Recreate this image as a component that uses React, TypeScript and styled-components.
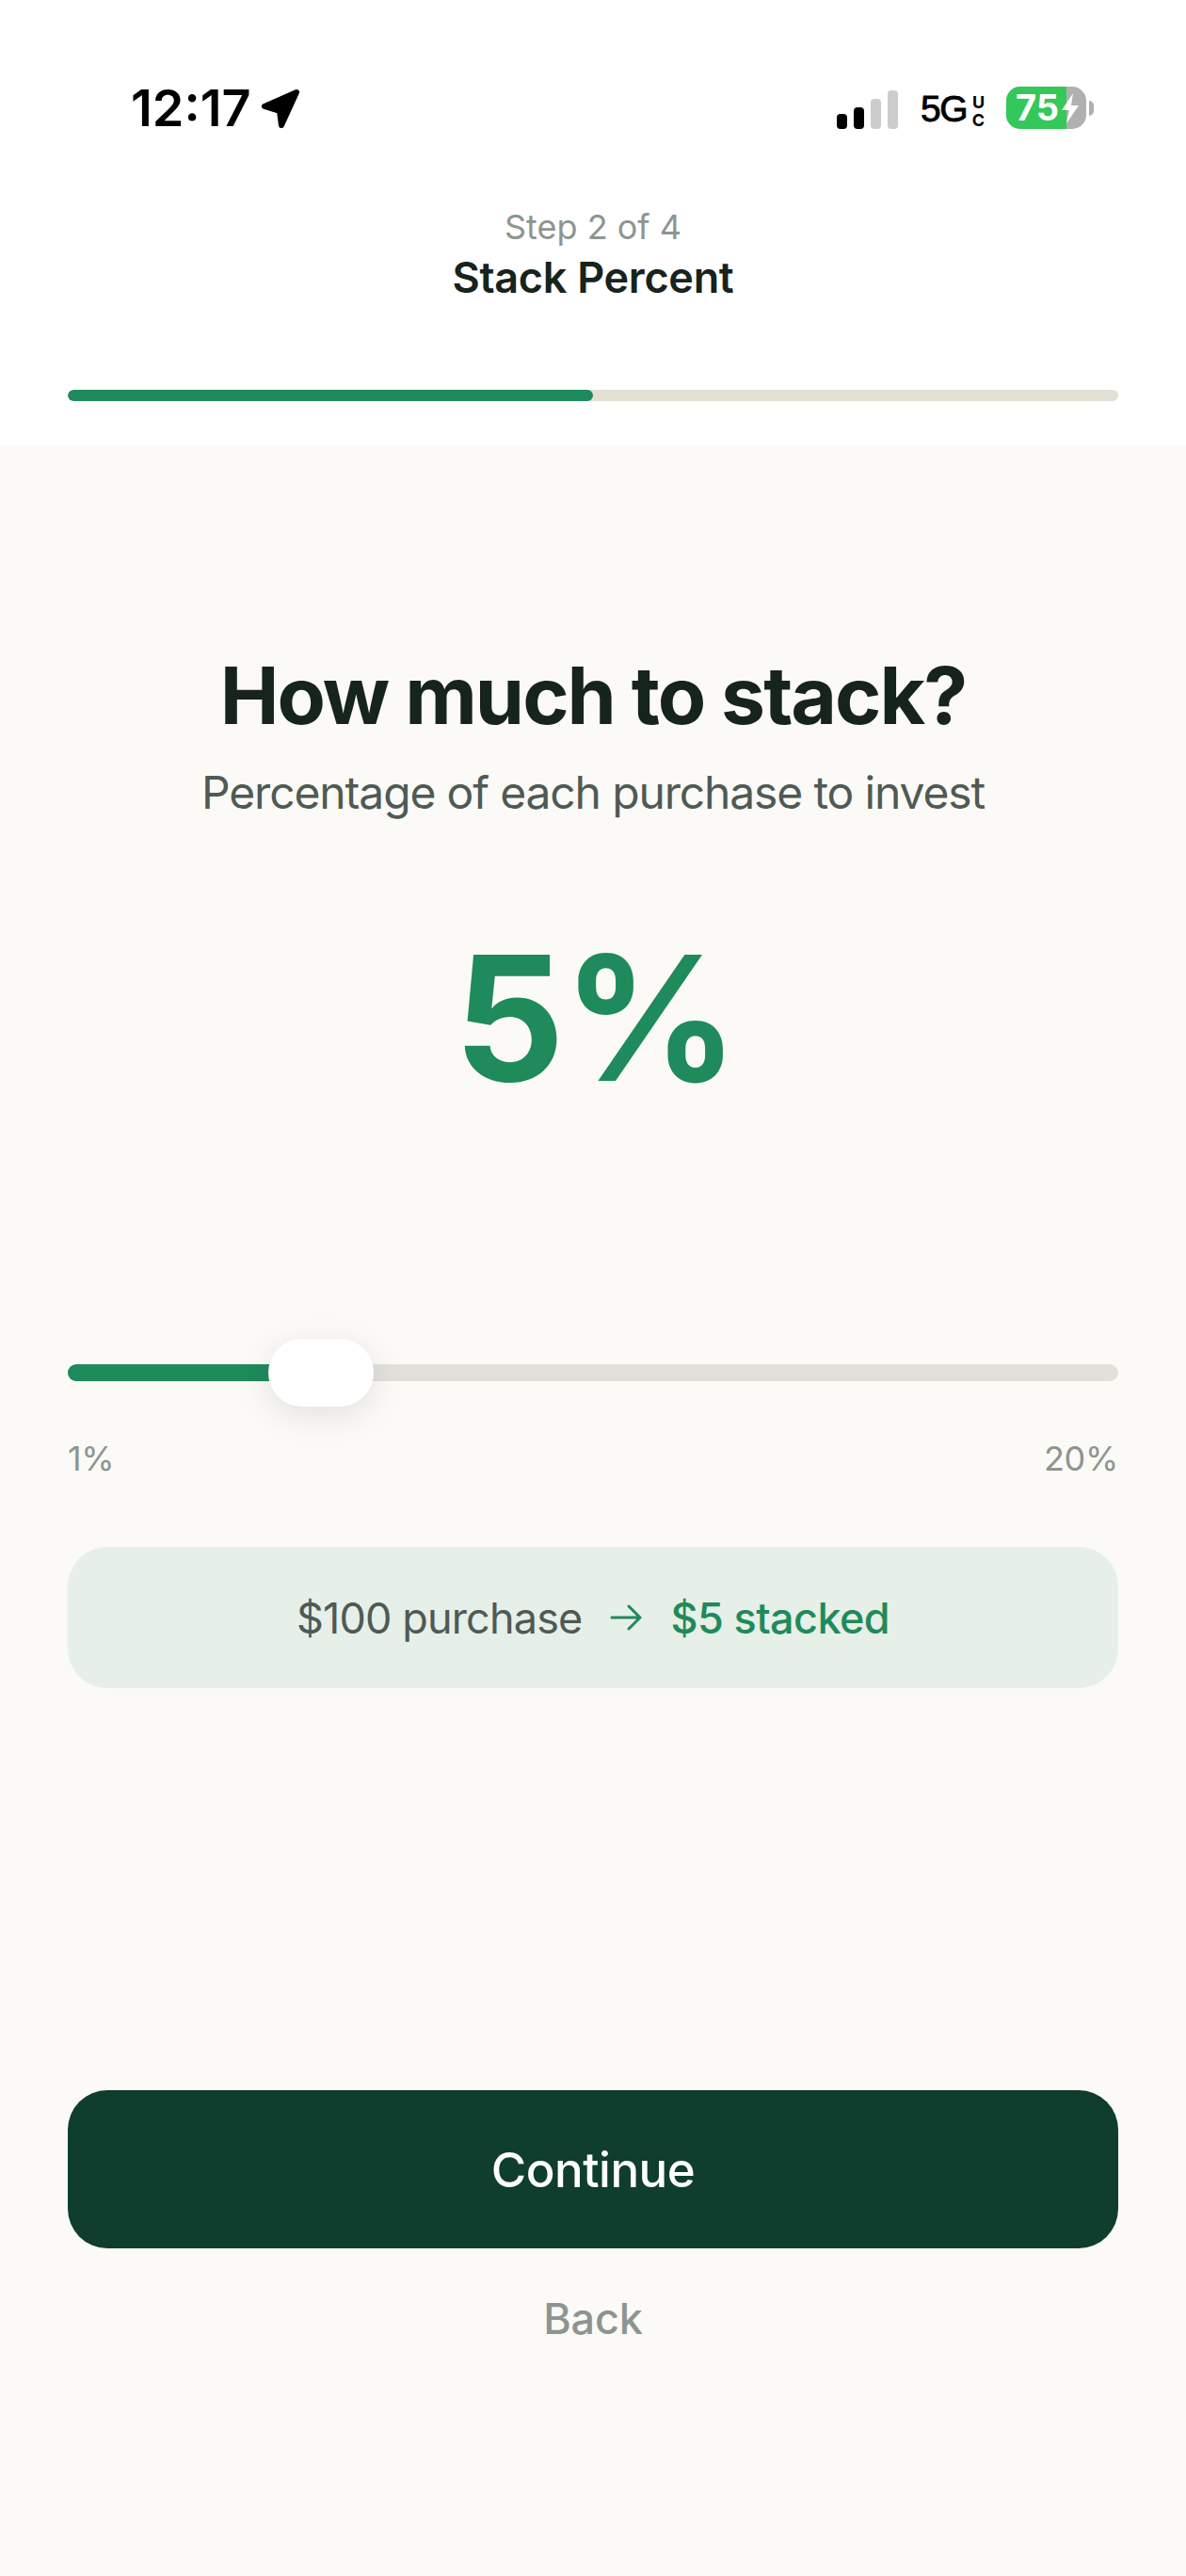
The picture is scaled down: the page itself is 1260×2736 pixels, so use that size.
import styled, { createGlobalStyle } from "styled-components";

const GlobalStyle = createGlobalStyle`
  html, body {
    margin: 0;
    padding: 0;
    background: #fbfaf6;
  }
  * {
    box-sizing: border-box;
  }
`;

const Page = styled.div`
  width: 1260px;
  height: 2736px;
  display: flex;
  flex-direction: column;
  overflow: hidden;
  font-family: Inter, "Liberation Sans", sans-serif;
  color: #17231d;
`;

const Header = styled.header`
  height: 474px;
  flex: none;
  background: #ffffff;
  padding: 0 72px;
  display: flex;
  flex-direction: column;
`;

const StatusBar = styled.div`
  height: 100px;
  margin: 72px 26px 0 67px;
  display: flex;
  align-items: flex-start;
  justify-content: space-between;
`;

const TimeGroup = styled.div`
  display: flex;
  align-items: center;
  gap: 10px;
  height: 86px;
`;

const Time = styled.span`
  font-size: 54px;
  font-weight: 600;
  line-height: 86px;
  color: #000000;
`;

const StatusRight = styled.div`
  display: flex;
  align-items: center;
  height: 45px;
  margin-top: 20px;
  width: 273px;
  flex: none;
`;

const SignalBars = styled.div`
  display: flex;
  align-items: flex-end;
  gap: 7px;
  width: 65px;
  height: 41px;
  margin-top: 4px;
  margin-right: 24px;
  flex: none;
`;

const SignalBar = styled.i<{ $height: number; $on?: boolean }>`
  display: block;
  width: 11px;
  height: ${(p) => p.$height}px;
  border-radius: 4px;
  background: ${(p) => (p.$on ? "#000000" : "#cccccc")};
`;

const Network = styled.span`
  width: 49px;
  flex: none;
  font-family: "Liberation Sans", sans-serif;
  font-size: 39px;
  font-weight: 400;
  -webkit-text-stroke: 0.9px #000000;
  line-height: 45px;
  color: #000000;
  letter-spacing: -1.5px;
  margin-top: 2px;
`;

const NetworkSmall = styled.span`
  display: flex;
  flex-direction: column;
  align-items: center;
  gap: 6px;
  width: 15px;
  flex: none;
  margin: 6px 22px 0 5px;
  font-size: 18px;
  font-weight: 700;
  line-height: 13px;
  color: #000000;
`;

const Battery = styled.div`
  position: relative;
  width: 85px;
  height: 45px;
  border-radius: 15px;
  overflow: hidden;
  background: #b0b0b0;
  flex: none;
`;

const BatteryFill = styled.div<{ $width: number }>`
  height: 100%;
  width: ${(p) => p.$width}px;
  background: #34c759;
  padding-left: 10px;
  font-size: 38px;
  font-weight: 700;
  line-height: 45px;
  color: #ffffff;
`;

const BatteryBolt = styled.svg`
  position: absolute;
  right: 7px;
  top: 7px;
`;

const BatteryNub = styled.i`
  display: block;
  width: 5px;
  height: 16px;
  margin-left: 3px;
  border-radius: 0 6px 6px 0;
  background: #b0b0b0;
  flex: none;
`;

const StepBlock = styled.div`
  text-align: center;
  margin-top: 47px;
`;

const StepLabel = styled.div`
  font-size: 36px;
  line-height: 44px;
  color: #8d958f;
`;

const StepTitle = styled.div`
  margin-top: 5px;
  font-size: 45px;
  font-weight: 600;
  line-height: 54px;
  letter-spacing: -0.3px;
  color: #17231d;
`;

const Progress = styled.div`
  height: 12px;
  margin-top: 92px;
  border-radius: 6px;
  background: #e3e0d5;
  overflow: hidden;
`;

const ProgressFill = styled.div<{ $percent: number }>`
  height: 100%;
  width: ${(p) => p.$percent}%;
  border-radius: 6px;
  background: #1f8a5b;
`;

const Main = styled.main`
  flex: 1;
  background: #fbfaf6;
  padding: 0 72px;
  display: flex;
  flex-direction: column;
`;

const Question = styled.h1`
  margin: 215px 0 0;
  font-size: 84px;
  font-weight: 700;
  line-height: 100px;
  letter-spacing: -2px;
  text-align: center;
  color: #17231d;
`;

const Subtitle = styled.p`
  margin: 24px 0 0;
  font-size: 48px;
  line-height: 58px;
  letter-spacing: -1.15px;
  text-align: center;
  color: #4f5a54;
`;

const Percent = styled.div`
  margin-top: 95px;
  font-size: 184px;
  font-weight: 700;
  line-height: 230px;
  letter-spacing: -2px;
  padding-left: 5px;
  text-align: center;
  color: #1f8a5b;
`;

const Slider = styled.div`
  position: relative;
  height: 18px;
  margin-top: 253px;
  border-radius: 9px;
  background: #e2e0db;
`;

const SliderFill = styled.div<{ $width: number }>`
  height: 100%;
  width: ${(p) => p.$width}px;
  border-radius: 9px 0 0 9px;
  background: #1f8a5b;
`;

const SliderThumb = styled.div<{ $left: number }>`
  position: absolute;
  left: ${(p) => p.$left}px;
  top: -27px;
  width: 112px;
  height: 72px;
  border-radius: 36px;
  background: #ffffff;
  box-shadow: 0 9px 36px rgba(0, 0, 0, 0.1);
`;

const RangeLabels = styled.div`
  display: flex;
  justify-content: space-between;
  margin-top: 60px;
  font-size: 36px;
  line-height: 44px;
  letter-spacing: -0.3px;
  color: #8d958f;
`;

const Example = styled.div`
  height: 150px;
  margin-top: 72px;
  border-radius: 42px;
  background: #e6efe8;
  display: flex;
  align-items: center;
  justify-content: center;
  gap: 30px;
  font-size: 45px;
`;

const ExampleFrom = styled.span`
  letter-spacing: -0.85px;
  color: #4f5a54;
`;

const ExampleTo = styled.span`
  font-weight: 500;
  letter-spacing: -0.6px;
  color: #1f8a5b;
`;

const PrimaryButton = styled.button`
  display: block;
  width: 100%;
  height: 168px;
  margin-top: 427px;
  border: 0;
  border-radius: 42px;
  background: #0f3d2e;
  color: #ffffff;
  font-family: inherit;
  font-size: 51px;
  font-weight: 500;
  letter-spacing: -0.5px;
`;

const BackButton = styled.button`
  display: block;
  width: 100%;
  margin-top: 48px;
  padding: 0;
  border: 0;
  background: none;
  color: #8d958f;
  font-family: inherit;
  font-size: 45px;
  font-weight: 500;
  line-height: 54px;
  letter-spacing: -0.2px;
`;

const LocationArrow = () => (
  <svg width="42" height="43" viewBox="0 0 42 43">
    <path
      d="M38 4 L4 19 L20 24 L22 39 Z"
      fill="#000000"
      stroke="#000000"
      strokeWidth="6"
      strokeLinejoin="round"
    />
  </svg>
);

const App = () => {
  return (
    <Page>
      <GlobalStyle />
      <Header>
        <StatusBar>
          <TimeGroup>
            <Time>12:17</Time>
            <LocationArrow />
          </TimeGroup>
          <StatusRight>
            <SignalBars>
              <SignalBar $height={16} $on />
              <SignalBar $height={23} $on />
              <SignalBar $height={32} />
              <SignalBar $height={41} />
            </SignalBars>
            <Network>5G</Network>
            <NetworkSmall>
              <span>U</span>
              <span>C</span>
            </NetworkSmall>
            <Battery>
              <BatteryFill $width={64}>75</BatteryFill>
              <BatteryBolt width="20" height="32" viewBox="0 0 20 32">
                <path d="M13 0 L1 18 L9 18 L6 32 L19 13 L11 13 Z" fill="#ffffff" />
              </BatteryBolt>
            </Battery>
            <BatteryNub />
          </StatusRight>
        </StatusBar>
        <StepBlock>
          <StepLabel>Step 2 of 4</StepLabel>
          <StepTitle>Stack Percent</StepTitle>
        </StepBlock>
        <Progress>
          <ProgressFill $percent={50} />
        </Progress>
      </Header>
      <Main>
        <Question>How much to stack?</Question>
        <Subtitle>Percentage of each purchase to invest</Subtitle>
        <Percent>5%</Percent>
        <Slider>
          <SliderFill $width={220} />
          <SliderThumb $left={213} />
        </Slider>
        <RangeLabels>
          <span>1%</span>
          <span>20%</span>
        </RangeLabels>
        <Example>
          <ExampleFrom>$100 purchase</ExampleFrom>
          <svg width="34" height="28" viewBox="0 0 34 28" fill="none" stroke="#1f8a5b" strokeWidth="3" strokeLinecap="round" strokeLinejoin="round">
            <path d="M2 14 H32 M20 2 L32 14 L20 26" />
          </svg>
          <ExampleTo>$5 stacked</ExampleTo>
        </Example>
        <PrimaryButton>Continue</PrimaryButton>
        <BackButton>Back</BackButton>
      </Main>
    </Page>
  );
};

export default App;
